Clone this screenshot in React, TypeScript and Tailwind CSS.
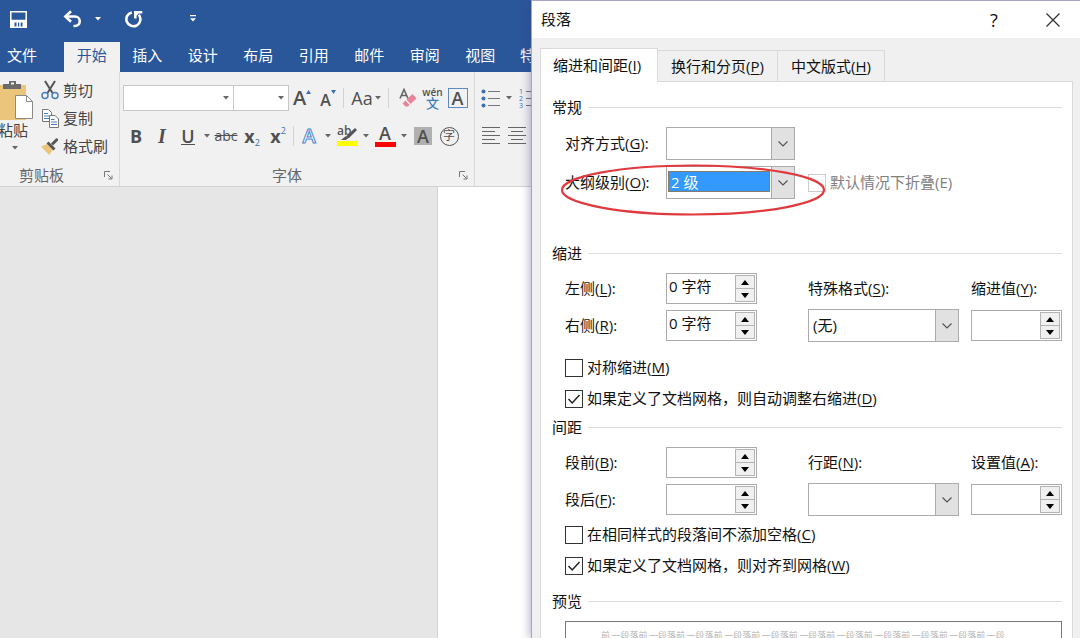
import React from "react";

interface LabelProps {
  text: string;
  hot?: string;
  end?: string;
}

const menuTabs = ["开始", "插入", "设计", "布局", "引用", "邮件", "审阅", "视图"];

// caption with the underlined access key, e.g. 对齐方式(G):
const Caption = ({ text, hot, end = "" }: LabelProps) => (
  <>
    {text}
    {hot && (
      <>
        (<span className="underline underline-offset-2">{hot}</span>)
      </>
    )}
    {end}
  </>
);

const SmallArrow = ({ className = "text-[#666]" }: { className?: string }) => (
  <svg viewBox="0 0 6 4" className={`h-1 w-1.5 shrink-0 ${className}`}>
    <path d="M0 0h6L3 3.6z" fill="currentColor" />
  </svg>
);

const ArrowButton = ({ label }: { label: string }) => (
  <button aria-label={label} className="flex h-[26px] w-3 shrink-0 items-center justify-center">
    <SmallArrow />
  </button>
);

const Tool = ({ label, children, className = "w-[26px]" }: { label: string; children: React.ReactNode; className?: string }) => (
  <button aria-label={label} className={`flex h-[26px] shrink-0 items-center justify-center leading-none text-[#505050] ${className}`}>
    {children}
  </button>
);

const Divider = () => <span className="mx-0.5 h-5 w-px shrink-0 bg-[#d4d4d4]" />;

const Launcher = ({ label }: { label: string }) => (
  <button aria-label={label} className="shrink-0">
    <svg viewBox="0 0 9 9" className="size-[9px]" fill="none" stroke="#777">
      <path d="M.5 6V.5H6M3.5 3.5l4 4M8 4.5V8H4.5" />
    </svg>
  </button>
);

const QuickAccess = () => (
  <div className="flex h-[42px] items-center pb-1 pl-[10px] text-white">
    <button aria-label="保存">
      <svg viewBox="0 0 17 17" className="size-[17px]" fill="none" stroke="currentColor" strokeWidth="1.5">
        <path d="M.8.8h15.4v15.4H.8z" />
        <path d="M.8 9.500h15.400v6.700H.8z" fill="currentColor" />
        <path d="M4.500 11.500h2v4h-2zM8 11.500h1.200v4H8zM10.700 11.500h1.800v4h-1.800z" fill="#2a579a" stroke="none" />
      </svg>
    </button>
    <button aria-label="撤消" className="ml-9">
      <svg viewBox="0 0 20 18" className="h-[18px] w-5" fill="none" stroke="currentColor" strokeWidth="2.6">
        <path d="M2.500 6.500H12a4.700 4.700 0 0 1 0 9.500h-1.500" />
        <path d="M8 1.200 2.400 6.500 8 11.800" />
      </svg>
    </button>
    <button aria-label="撤消选项" className="ml-3">
      <SmallArrow className="text-white" />
    </button>
    <button aria-label="重复" className="ml-6">
      <svg viewBox="0 0 18 18" className="size-[18px]" fill="none" stroke="currentColor" strokeWidth="2.6">
        <path d="M6.800 2.400A7 7 0 1 0 13.800 4.800" />
        <path d="M9 1h8.300v2.600h-3.600L11.600 5.800V8.600H9z" fill="currentColor" stroke="none" />
      </svg>
    </button>
    <button aria-label="自定义快速访问工具栏" className="ml-[46px]">
      <svg viewBox="0 0 8 8" className="size-2" fill="currentColor">
        <path d="M1 0h6v1.2H1zM1 3.2h6L4 6.6z" />
      </svg>
    </button>
  </div>
);

const Clipboard = () => (
  <div className="flex w-[119px] shrink-0 flex-col">
    <div className="flex h-[93px]">
      <button className="-ml-2 flex w-[42px] shrink-0 flex-col items-center pt-2 leading-5">
        <svg viewBox="0 0 42 40" className="h-10 w-[42px] shrink-0">
          <path d="M5 5h29v35H5z" fill="#ecc57c" />
          <path d="M11 4h6V1h7v3h5v5H11z" fill="#6a6a6a" />
          <path d="M19 2.5h3v2h-3z" fill="#f1f1f1" />
          <path d="M23.500 15.500h11l6 6v17h-17z" fill="#fff" stroke="#8a8a8a" />
          <path d="M34.500 15.500v6h6" fill="none" stroke="#8a8a8a" />
        </svg>
        <span className="whitespace-nowrap">粘贴</span>
        <span className="mt-1.5 ml-1 flex"><SmallArrow /></span>
      </button>
      <div className="flex flex-col pt-1 pl-[7px]">
        <button className="flex h-7 items-center gap-1">
          <svg viewBox="0 0 18 20" className="h-5 w-[18px]" fill="none">
            <path d="M4 1l7.500 12M14 1L6.500 13" stroke="#555" strokeWidth="2" />
            <circle cx="4" cy="15.500" r="3" stroke="#4a7ebb" strokeWidth="1.500" />
            <circle cx="14" cy="15.500" r="3" stroke="#4a7ebb" strokeWidth="1.500" />
          </svg>
          剪切
        </button>
        <button className="flex h-7 items-center gap-1">
          <svg viewBox="0 0 18 19" className="h-[19px] w-[18px]" fill="#fff" stroke="#777">
            <path d="M1.500.500h6l3 3v9h-9z" />
            <path d="M3 4.500h4M3 7h5M3 9.500h5" stroke="#4a7ebb" />
            <path d="M8.500 6.500h5.500l3.500 3.500v8.500h-9z" />
            <path d="M10 10.500h3.500M10 13h6M10 15.500h6" stroke="#4a7ebb" />
          </svg>
          复制
        </button>
        <button className="flex h-7 items-center gap-1">
          <svg viewBox="0 0 18 18" className="size-[18px]">
            <path d="M0 9.500l6-2.500 6 6-4 5z" fill="#ecc57c" />
            <path d="M5.500 6.500l2-2 7 7-2 2z" fill="#555" />
            <path d="M10 6.500l5-5a1.500 1.500 0 0 1 2 2l-5 5z" fill="#555" />
          </svg>
          格式刷
        </button>
      </div>
    </div>
    <div className="flex h-5 items-center pr-1.5 pl-[19px] text-[#666]">
      <span className="flex-1">剪贴板</span>
      <Launcher label="剪贴板选项" />
    </div>
  </div>
);

const FontGroup = () => (
  <div className="flex w-[355px] shrink-0 flex-col border-l border-[#d8d8d8] pl-[3px]">
    <div className="flex h-[93px] flex-col gap-3 pt-[13px]">
      <div className="flex items-center">
        <div className="flex h-[26px] w-[111px] shrink-0 items-center border border-[#c6c6c6] bg-white pr-1">
          <input aria-label="字体" className="min-w-0 flex-1 outline-none" />
          <SmallArrow />
        </div>
        <div className="-ml-px flex h-[26px] w-14 shrink-0 items-center border border-[#c6c6c6] bg-white pr-1">
          <input aria-label="字号" className="min-w-0 flex-1 outline-none" />
          <SmallArrow />
        </div>
        <Tool label="增大字号">
          <span className="text-xl font-semibold">A</span>
          <svg viewBox="0 0 5 4" className="mb-3 h-1 w-[5px]"><path d="M0 4h5L2.500 0z" fill="#3b6fb6" /></svg>
        </Tool>
        <Tool label="减小字号">
          <span className="pt-1 text-base font-semibold">A</span>
          <svg viewBox="0 0 5 4" className="mb-3 h-1 w-[5px]"><path d="M0 0h5L2.500 4z" fill="#3b6fb6" /></svg>
        </Tool>
        <Divider />
        <Tool label="更改大小写" className="w-10 gap-0.5">
          <span className="text-lg">Aa</span>
          <SmallArrow />
        </Tool>
        <Divider />
        <div className="ml-1 flex">
          <Tool label="清除格式" className="w-[25px]">
            <svg viewBox="0 0 18 20" className="h-5 w-[18px]">
              <path d="M1 10.500L5 1.500l4 9M2.500 7.500h5" fill="none" stroke="#666" strokeWidth="1.600" />
              <path d="M7.500 11.500l6-5.500 4 4.500-6 5.500z" fill="#e8849a" />
              <path d="M6.500 12.500l4 4.500-1.500 1.500H6.500l-3-3z" fill="#e8849a" />
            </svg>
          </Tool>
          <Tool label="拼音指南" className="w-[25px] flex-col">
            <span className="text-[10px] leading-[10px] font-semibold">wén</span>
            <span className="text-[13px] leading-[13px] font-medium text-[#3b7fc0]">文</span>
          </Tool>
          <Tool label="字符边框" className="w-[25px]">
            <span className="flex size-5 items-center justify-center border border-[#5f8ac0] text-lg font-semibold">A</span>
          </Tool>
        </div>
      </div>
      <div className="flex items-center">
        <Tool label="加粗"><span className="text-lg font-bold">B</span></Tool>
        <Tool label="倾斜"><span className="font-['Liberation_Serif',serif] text-xl font-bold italic">I</span></Tool>
        <Tool label="下划线"><span className="border-b border-[#505050] text-lg leading-4 font-semibold">U</span></Tool>
        <ArrowButton label="下划线选项" />
        <Tool label="删除线"><span className="text-sm line-through">abc</span></Tool>
        <Tool label="下标">
          <span className="text-lg font-bold">x</span>
          <span className="pt-3 text-[9px] text-[#3b6fb6]">2</span>
        </Tool>
        <Tool label="上标">
          <span className="text-lg font-bold">x</span>
          <span className="pb-3 text-[9px] text-[#3b6fb6]">2</span>
        </Tool>
        <Divider />
        <Tool label="文本效果">
          <span className="text-xl font-semibold text-white [-webkit-text-stroke:1px_#4a86cf]">A</span>
        </Tool>
        <ArrowButton label="文本效果选项" />
        <Tool label="突出显示">
          <svg viewBox="0 0 22 22" className="size-[22px]">
            <text x="1" y="10" fontSize="12" fontWeight="600" fill="#555">ab</text>
            <path d="M19 3l2 2-8 8-3 .500 1-3z" fill="#555" />
            <path d="M5 15l5-4 2 2-2 2z" fill="#555" />
            <path d="M1 16h20v5H1z" fill="#ff0" />
          </svg>
        </Tool>
        <ArrowButton label="突出显示选项" />
        <Tool label="字体颜色">
          <span className="flex h-[22px] w-[21px] items-end justify-center border-b-5 border-[#f00] text-lg leading-[18px] font-semibold">A</span>
        </Tool>
        <ArrowButton label="字体颜色选项" />
        <Tool label="字符底纹">
          <span className="flex size-[18px] items-center justify-center bg-[#b0b0b0] text-lg font-semibold">A</span>
        </Tool>
        <Tool label="带圈字符">
          <span className="flex size-[19px] items-center justify-center rounded-full border border-[#555] text-xs">字</span>
        </Tool>
      </div>
    </div>
    <div className="flex h-5 items-center pr-1.5 text-[#666]">
      <span className="flex-1 pr-2 text-center">字体</span>
      <Launcher label="字体选项" />
    </div>
  </div>
);

const ParagraphGroup = () => (
  <div className="flex flex-col gap-3 border-l border-[#d8d8d8] pt-[13px] pl-1.5">
    <div className="flex items-center">
      <Tool label="项目符号" className="w-5">
        <svg viewBox="0 0 20 20" className="size-5" stroke="#777">
          <path d="M7 3.500h12M7 10.500h12M7 17.500h12" />
          <g fill="#3b6fb6" stroke="none">
            <circle cx="2.500" cy="3.500" r="2" />
            <circle cx="2.500" cy="10.500" r="2" />
            <circle cx="2.500" cy="17.500" r="2" />
          </g>
        </svg>
      </Tool>
      <span className="ml-0.5 flex"><ArrowButton label="项目符号选项" /></span>
      <Tool label="编号" className="ml-1 w-5">
        <svg viewBox="0 0 20 20" className="size-5" stroke="#777">
          <path d="M7 3.500h12M7 10.500h12M7 17.500h12" />
          <g fill="#3b6fb6" stroke="none" fontSize="7">
            <text x="0" y="6">1</text>
            <text x="0" y="13">2</text>
            <text x="0" y="20">3</text>
          </g>
        </svg>
      </Tool>
    </div>
    <div className="flex items-center gap-1.5">
      <Tool label="左对齐" className="w-5">
        <svg viewBox="0 0 20 20" className="size-5" stroke="#666">
          <path d="M1 1.500h18M1 5.500h13M1 9.500h18M1 13.500h13M1 17.500h18" />
        </svg>
      </Tool>
      <Tool label="居中" className="w-5">
        <svg viewBox="0 0 20 20" className="size-5" stroke="#666">
          <path d="M1 1.500h18M4 5.500h12M1 9.500h18M4 13.500h12M1 17.500h18" />
        </svg>
      </Tool>
    </div>
  </div>
);

const WordWindow = () => (
  <div className="flex min-w-0 flex-1 flex-col overflow-hidden">
    <header className="bg-[#2a579a]">
      <QuickAccess />
      <nav className="flex h-[30px] items-stretch whitespace-nowrap text-white">
        <button className="w-16 shrink-0 pr-5 pb-1">文件</button>
        <div className="grid w-[444px] shrink-0 grid-cols-8">
          {menuTabs.map((tab, i) => (
            <button key={tab} className={i === 0 ? "bg-[#f1f1f1] pb-1 text-[#2a579a]" : "pb-1"}>
              {tab}
            </button>
          ))}
        </div>
        <button className="shrink-0 px-3 pb-1">特</button>
      </nav>
    </header>
    <div className="flex h-[115px] shrink-0 border-b border-[#d2d2d2] bg-[#f1f1f1] whitespace-nowrap text-[#444]">
      <Clipboard />
      <FontGroup />
      <ParagraphGroup />
    </div>
    <main className="flex flex-1 bg-[#e6e6e6]">
      <div className="ml-[437px] flex-1 border-l border-[#d2d2d2] bg-white" />
    </main>
  </div>
);

const GroupTitle = ({ children, className = "" }: { children: React.ReactNode; className?: string }) => (
  <div className={`flex items-center gap-1.5 leading-5 ${className}`}>
    <h3>{children}</h3>
    <span className="h-px flex-1 bg-[#dcdcdc]" />
  </div>
);

const Select = ({ id, value = "", active, className = "" }: { id: string; value?: string; active?: boolean; className?: string }) => (
  <div className={`flex h-[33px] items-center border border-[#ababab] bg-white ${className}`}>
    <select
      id={id}
      className={`min-w-0 flex-1 appearance-none outline-none ${
        active ? "mx-px mb-0.5 h-[21px] border border-[#8a7a6a] bg-[#3399ff] pl-0.5 leading-4 text-white" : "h-full pl-1"
      }`}
    >
      <option>{value}</option>
    </select>
    <span className="-my-px -mr-px flex w-6 items-center justify-center self-stretch border border-[#ababab] bg-[#e1e1e1]">
      <svg viewBox="0 0 10 6" className="h-1.5 w-2.5" fill="none" stroke="#555" strokeWidth="1.200">
        <path d="M.500.500L5 5 9.500.500" />
      </svg>
    </span>
  </div>
);

const Spinner = ({ id, value = "" }: { id: string; value?: string }) => (
  <div className="flex h-[31px] w-[91px] border border-[#ababab] bg-white p-px">
    <input id={id} defaultValue={value} className="min-w-0 flex-1 pb-1 pl-px outline-none" />
    <div className="flex w-5 shrink-0 flex-col">
      <button aria-label="增加" className="flex flex-1 items-center justify-center border border-[#b4b4b4] bg-[#f0f0f0]">
        <svg viewBox="0 0 8 5" className="h-[5px] w-2"><path d="M0 5h8L4 0z" /></svg>
      </button>
      <button aria-label="减少" className="-mt-px flex flex-1 items-center justify-center border border-[#b4b4b4] bg-[#f0f0f0]">
        <svg viewBox="0 0 8 5" className="h-[5px] w-2"><path d="M0 0h8L4 5z" /></svg>
      </button>
    </div>
  </div>
);

const Check = ({ text, hot, checked, disabled }: { text: string; hot: string; checked?: boolean; disabled?: boolean }) => (
  <label className={`flex h-[31px] items-center gap-1 ${disabled ? "text-[#808080]" : ""}`}>
    <span className="grid place-items-center">
      <input
        type="checkbox"
        defaultChecked={checked}
        disabled={disabled}
        className="peer col-start-1 row-start-1 size-[18px] appearance-none border border-[#333] bg-white disabled:border-[#ccc]"
      />
      <svg viewBox="0 0 14 12" className="invisible col-start-1 row-start-1 h-3 w-3.5 peer-checked:visible" fill="none" stroke="#222" strokeWidth="1.500">
        <path d="M1.500 6l3.700 4L12.500 2" />
      </svg>
    </span>
    <span>{disabled ? `${text}(${hot})` : <Caption text={text} hot={hot} />}</span>
  </label>
);

const row = "grid grid-cols-[101px_142fr_163fr_91px] items-center pl-[13px]";

const ParagraphDialog = () => (
  <div
    role="dialog"
    aria-label="段落"
    className="z-10 flex w-[549px] shrink-0 flex-col overflow-hidden border-t border-l border-[#a9a3c6] bg-[#f0f0f0] text-[#111] shadow-[-2px_0_8px_rgba(60,60,120,0.35)]"
  >
    <div className="flex h-[37px] shrink-0 items-center bg-white pl-[9px]">
      <h2 className="flex-1">段落</h2>
      <button aria-label="帮助" className="w-10 text-lg">?</button>
      <button aria-label="关闭" className="mr-5 ml-8">
        <svg viewBox="0 0 14 14" className="size-3.5" stroke="#333" strokeWidth="1.300">
          <path d="M.500.500l13 13M13.500.500l-13 13" />
        </svg>
      </button>
    </div>
    <div className="flex flex-1 flex-col pt-[10px] pr-[7px] pl-2">
      <div role="tablist" className="flex items-end">
        <button role="tab" aria-selected="true" className="z-10 -mb-px h-[34px] border border-b-0 border-[#d9d9d9] bg-white pr-4 pl-3">
          <Caption text="缩进和间距" hot="I" />
        </button>
        <button role="tab" className="h-[31px] border-t border-r border-[#d9d9d9] px-[13px]">
          <Caption text="换行和分页" hot="P" />
        </button>
        <button role="tab" className="h-[31px] border-t border-r border-[#d9d9d9] px-[13px]">
          <Caption text="中文版式" hot="H" />
        </button>
      </div>
      <div className="flex-1 border border-b-0 border-[#d9d9d9] bg-white pt-[15px] pr-[10px] pl-[11px]">
        <GroupTitle>常规</GroupTitle>
        <div className={`mt-[10px] ${row}`}>
          <label htmlFor="align"><Caption text="对齐方式" hot="G" end=":" /></label>
          <Select id="align" className="w-[129px]" />
        </div>
        <div className={`relative mt-1.5 ${row}`}>
          <label htmlFor="outline"><Caption text="大纲级别" hot="O" end=":" /></label>
          <Select id="outline" value="2 级" active className="w-[129px]" />
          <div className="col-span-2">
            <Check text="默认情况下折叠" hot="E" disabled />
          </div>
          <svg viewBox="0 0 266 54" className="pointer-events-none absolute -top-0.5 left-2 h-[54px] w-[266px]" fill="none" stroke="#e0393e" strokeWidth="2.200">
            <ellipse cx="133" cy="26" rx="131" ry="24.500" />
          </svg>
        </div>

        <GroupTitle className="mt-11">缩进</GroupTitle>
        <div className={`mt-[10px] ${row}`}>
          <label htmlFor="left"><Caption text="左侧" hot="L" end=":" /></label>
          <Spinner id="left" value="0 字符" />
          <label htmlFor="special"><Caption text="特殊格式" hot="S" end=":" /></label>
          <label htmlFor="indent"><Caption text="缩进值" hot="Y" end=":" /></label>
        </div>
        <div className={`mt-[5px] ${row}`}>
          <label htmlFor="right"><Caption text="右侧" hot="R" end=":" /></label>
          <Spinner id="right" value="0 字符" />
          <Select id="special" value="(无)" className="mr-3" />
          <Spinner id="indent" />
        </div>
        <div className="mt-[10px] pl-[13px]">
          <Check text="对称缩进" hot="M" />
          <Check text="如果定义了文档网格，则自动调整右缩进" hot="D" checked />
        </div>

        <GroupTitle className="mt-[3px]">间距</GroupTitle>
        <div className={`mt-[10px] ${row}`}>
          <label htmlFor="before"><Caption text="段前" hot="B" end=":" /></label>
          <Spinner id="before" />
          <label htmlFor="spacing"><Caption text="行距" hot="N" end=":" /></label>
          <label htmlFor="at"><Caption text="设置值" hot="A" end=":" /></label>
        </div>
        <div className={`mt-[5px] ${row}`}>
          <label htmlFor="after"><Caption text="段后" hot="F" end=":" /></label>
          <Spinner id="after" />
          <Select id="spacing" className="mr-3" />
          <Spinner id="at" />
        </div>
        <div className="mt-[3px] pl-[13px]">
          <Check text="在相同样式的段落间不添加空格" hot="C" />
          <Check text="如果定义了文档网格，则对齐到网格" hot="W" checked />
        </div>

        <GroupTitle className="mt-[10px]">预览</GroupTitle>
        <div className="mt-[10px] ml-[13px] h-40 border border-[#777] pt-2 pr-14 pl-[35px]">
          <p className="flex justify-between text-[9px] leading-3 whitespace-nowrap text-[#b4b4b4]">
            <span>前</span>
            {Array.from({ length: 10 }, (_, i) => (
              <span key={i}>一段落前</span>
            ))}
            <span>一段</span>
          </p>
        </div>
      </div>
    </div>
  </div>
);

export default function App() {
  return (
    <div className="flex h-screen overflow-hidden font-['Open_Sans','Noto_Sans_CJK_SC',sans-serif] text-[15px]">
      <WordWindow />
      <ParagraphDialog />
    </div>
  );
}
